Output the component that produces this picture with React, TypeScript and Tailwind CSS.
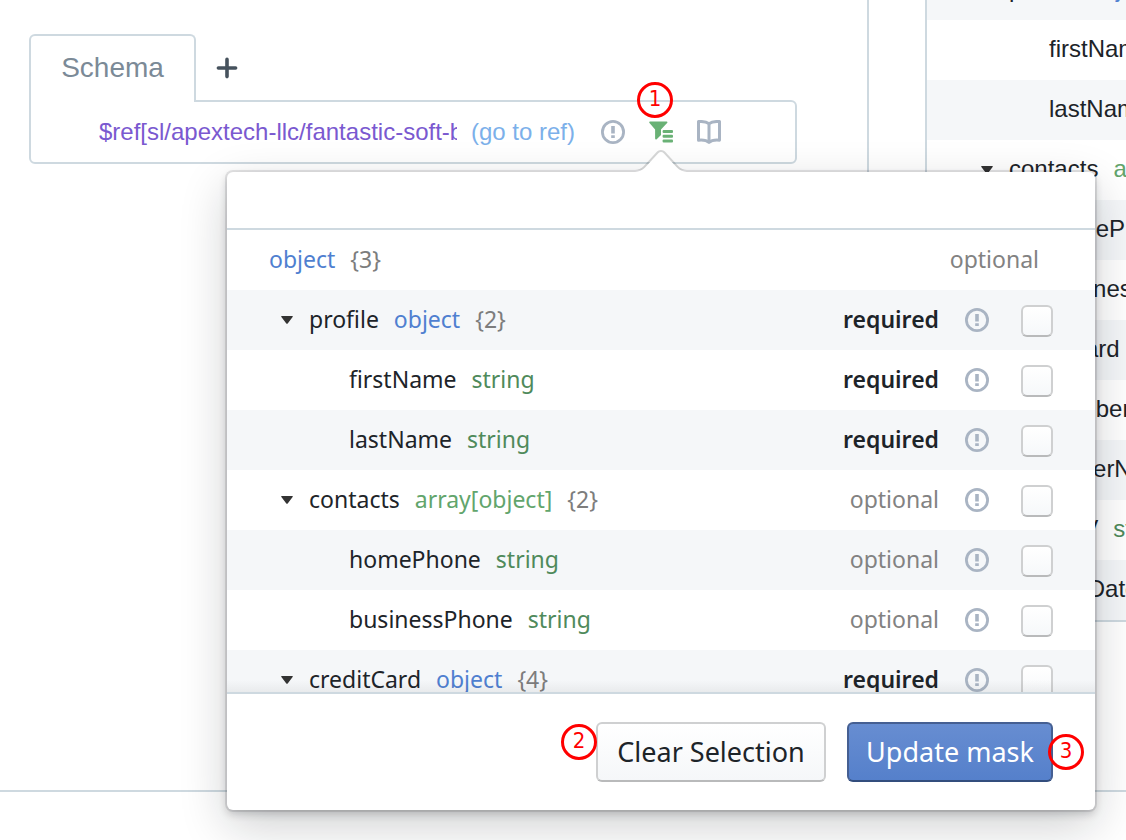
import React from "react";

type Field = {
  name?: string;
  type: "object" | "string" | "array[object]";
  count?: number;
  level: 0 | 1 | 2;
  required?: boolean;
};

const maskFields: Field[] = [
  { type: "object", count: 3, level: 0 },
  { name: "profile", type: "object", count: 2, level: 1, required: true },
  { name: "firstName", type: "string", level: 2, required: true },
  { name: "lastName", type: "string", level: 2, required: true },
  { name: "contacts", type: "array[object]", count: 2, level: 1 },
  { name: "homePhone", type: "string", level: 2 },
  { name: "businessPhone", type: "string", level: 2 },
  { name: "creditCard", type: "object", count: 4, level: 1, required: true },
];

const previewFields: Field[] = [
  { name: "profile", type: "object", count: 2, level: 1 },
  { name: "firstName", type: "string", level: 2 },
  { name: "lastName", type: "string", level: 2 },
  { name: "contacts", type: "array[object]", count: 2, level: 1 },
  { name: "homePhone", type: "string", level: 2 },
  { name: "businessPhone", type: "string", level: 2 },
  { name: "creditCard", type: "object", count: 4, level: 1 },
  { name: "number", type: "string", level: 2 },
  { name: "ownerName", type: "string", level: 2 },
  { name: "CVV", type: "string", level: 2 },
  { name: "expDate", type: "string", level: 2 },
];

const typeColor = {
  object: "text-[#4f7fd0]",
  string: "text-[#4f8a5b]",
  "array[object]": "text-[#62a56c]",
};

const indent = { 0: "pl-[42px]", 1: "pl-[52px]", 2: "pl-[122px]" };

function Caret() {
  return (
    <button type="button" aria-label="Toggle" className="-mr-px flex w-4 shrink-0 items-center justify-center pt-0.5">
      <svg width="12" height="8" viewBox="0 0 12 8" fill="#333333" aria-hidden="true">
        <path d="M0.8 0h10.4q1.1 0 .4.9L6.7 7.4q-.7.8-1.4 0L.4.9Q-.3 0 .8 0z" />
      </svg>
    </button>
  );
}

function FieldLabel({ field }: { field: Field }) {
  return (
    <div className="flex items-center gap-[15px] whitespace-nowrap pb-0.5">
      {field.level === 1 && <Caret />}
      {field.name && <span className="text-[#1d2429]">{field.name}</span>}
      <span className={typeColor[field.type]}>{field.type}</span>
      {field.count !== undefined && <span className="text-[#7d7d7d]">{"{" + field.count + "}"}</span>}
    </div>
  );
}

function IssueIcon() {
  return (
    <svg width="24" height="24" viewBox="0 0 24 24" fill="none" aria-hidden="true">
      <circle cx="12" cy="12" r="10.6" stroke="#a9b4c3" strokeWidth="2.8" />
      <path d="M10.2 6h3.6v7.6h-3.6zM10.2 15.2h3.6v2.8h-3.6z" fill="#a9b4c3" />
    </svg>
  );
}

function FilterListIcon() {
  return (
    <svg width="24" height="24" viewBox="0 0 24 24" fill="#69b175" aria-hidden="true">
      <path d="M1 1.5h16.6c.9 0 1.1.9.5 1.5L12 9.6v4.8c0 .5-.2.9-.5 1.2l-3.8 3.6c-.7.6-1.6.2-1.6-.6V9.6L.5 3C-.1 2.400.2 1.500 1 1.500z" />
      <rect x="13.600" y="10" width="10.400" height="3" rx="1" />
      <rect x="13.600" y="14.700" width="10.400" height="3" rx="1" />
      <rect x="13.600" y="19.400" width="10.400" height="3" rx="1" />
    </svg>
  );
}

function BookIcon() {
  return (
    <svg
      width="24"
      height="24"
      viewBox="0 0 24 24"
      fill="none"
      stroke="#a9b4c3"
      strokeWidth="3"
      strokeLinejoin="round"
      aria-hidden="true"
    >
      <path d="M12 3.600C9.200 1.500 5 1.300 1.500 1.600v18.600C5 19.900 9.400 20 12 22.400c2.600-2.400 7-2.500 10.500-2.200V1.600C19 1.300 14.800 1.500 12 3.600z" />
      <path d="M12 3.600v18" />
    </svg>
  );
}

function Marker({ label, place }: { label: string; place: string }) {
  return (
    <span
      className={
        "pointer-events-none absolute z-20 flex h-9 w-9 items-center justify-center rounded-full border-[3px] border-[#ff0000] pb-0.5 font-['DejaVu_Sans_Condensed','DejaVu_Sans',sans-serif] text-[22px] leading-none text-[#ff0000] " +
        place
      }
    >
      {label}
    </span>
  );
}

function MaskRow({ field }: { field: Field }) {
  const isRoot = field.level === 0;
  return (
    <li
      className={
        "flex h-[60px] items-center justify-between even:bg-[#f5f7f9] " +
        indent[field.level] +
        (isRoot ? " pr-14" : " pr-[42px]")
      }
    >
      <FieldLabel field={field} />
      <div className="flex items-center">
        {field.required ? (
          <span className="pb-0.5 font-semibold text-[#1d2429]">required</span>
        ) : (
          <span className="pb-0.5 text-[#828282]">optional</span>
        )}
        {!isRoot && (
          <>
            <button type="button" aria-label={"Validation for " + field.name} className="ml-[26px]">
              <IssueIcon />
            </button>
            <input
              type="checkbox"
              aria-label={"Select " + field.name}
              className="ml-8 mt-0.5 h-8 w-8 appearance-none rounded-md border-2 border-[#cfd0d1] border-b-[#b9babb] bg-linear-to-b from-white to-[#f6f8fa] checked:bg-[#5580cb]"
            />
          </>
        )}
      </div>
    </li>
  );
}

function MaskPopover() {
  return (
    <div
      role="dialog"
      aria-label="Mask selection"
      className="absolute left-1/2 top-[52px] z-10 w-[868px] -translate-x-1/2 rounded-md bg-white font-['Noto_Sans',sans-serif] text-[23px] leading-[30px] shadow-[0_0_0_2px_rgba(16,22,26,0.1),0_4px_8px_rgba(16,22,26,0.2),0_16px_48px_rgba(16,22,26,0.2)]"
    >
      <svg
        className="absolute -top-[22px] left-1/2 -translate-x-1/2"
        width="60"
        height="22"
        viewBox="0 0 30 11"
        aria-hidden="true"
      >
        <g transform="rotate(90 15 15)">
          <path
            fill="#10161a"
            fillOpacity="0.17"
            d="M8.110 6.302c1.015-.936 1.887-2.922 1.887-4.297v26c0-1.378-.868-3.357-1.888-4.297L.925 17.090c-1.237-1.140-1.233-3.034 0-4.170L8.110 6.302z"
          />
          <path
            fill="#ffffff"
            d="M8.787 7.036c1.220-1.125 2.210-3.376 2.210-5.030V0v30-2.005c0-1.654-.983-3.900-2.210-5.030l-7.183-6.616c-.810-.746-.802-1.960 0-2.700l7.183-6.613z"
          />
        </g>
      </svg>
      <div className="h-[58px] border-b-2 border-[#ced9e0]" />
      <div className="relative">
        <ul className="h-[462px] overflow-hidden">
          {maskFields.map((field) => (
            <MaskRow key={field.name ?? "root"} field={field} />
          ))}
        </ul>
        <div className="pointer-events-none absolute inset-x-0 bottom-0 h-3 bg-linear-to-b from-transparent to-black/5" />
      </div>
      <div className="flex justify-end gap-[21px] border-t-2 border-[#ced9e0] px-[42px] py-7 text-[27px]">
        <div className="relative">
          <button
            type="button"
            className="h-[60px] w-[230px] whitespace-nowrap rounded-md border-2 border-[#cfd0d1] border-b-[#b9babb] bg-linear-to-b from-white to-[#f5f7f9] text-[#1d2429]"
          >
            Clear Selection
          </button>
          <Marker label="2" place="-left-[35px] top-[2px]" />
        </div>
        <div className="relative">
          <button
            type="button"
            className="h-[60px] w-[206px] whitespace-nowrap rounded-md border-2 border-[#455f92] border-b-[#334d7d] bg-linear-to-b from-[#678dd1] to-[#5580cb] text-white"
          >
            Update mask
          </button>
          <Marker label="3" place="-right-[31px] top-3" />
        </div>
      </div>
    </div>
  );
}

function SchemaEditor() {
  return (
    <section className="min-w-0 flex-1 border-r-2 border-[#ced9e0] pl-[29px] pr-[70px] pt-[34px]">
      <div className="flex items-center">
        <button
          type="button"
          className="relative -mb-0.5 h-[68px] w-[167px] rounded-t-md border-2 border-b-0 border-[#ced9e0] bg-white pb-0.5 text-[28px] text-[#7b8a97]"
        >
          Schema
        </button>
        <button type="button" aria-label="Add tab" className="ml-5 pt-0.5">
          <svg width="22" height="22" viewBox="0 0 22 22" stroke="#46525d" strokeWidth="3.6" strokeLinecap="round">
            <path d="M11 2.400v17.200M2.400 11h17.200" />
          </svg>
        </button>
      </div>
      <div className="flex h-16 items-center rounded-md rounded-tl-none border-2 border-[#ced9e0] pl-[68px] pr-[74px]">
        <input
          type="text"
          aria-label="Schema reference"
          defaultValue="$ref[sl/apextech-llc/fantastic-soft-b"
          className="min-w-0 flex-1 bg-transparent text-[#7a59d0] outline-none"
        />
        <a href="#ref" className="ml-[14px] whitespace-nowrap text-[#7cb0ea]">
          (go to ref)
        </a>
        <div className="ml-[26px] flex gap-6">
          <button type="button" aria-label="Validation">
            <IssueIcon />
          </button>
          <div className="relative flex">
            <button type="button" aria-label="Edit mask">
              <FilterListIcon />
            </button>
            <MaskPopover />
            <Marker label="1" place="-left-3 -top-[38px]" />
          </div>
          <button type="button" aria-label="Documentation">
            <BookIcon />
          </button>
        </div>
      </div>
    </section>
  );
}

function Preview() {
  return (
    <section className="w-[257px] shrink-0 overflow-hidden pl-14">
      <ul className="-mt-10 border-b-2 border-l-2 border-[#ced9e0]">
        {previewFields.map((field) => (
          <li
            key={field.name}
            className={"flex h-[60px] items-center odd:bg-[#f5f7f9] " + indent[field.level]}
          >
            <FieldLabel field={field} />
          </li>
        ))}
      </ul>
    </section>
  );
}

export default function App() {
  return (
    <main className="min-h-screen overflow-hidden bg-white font-['Liberation_Sans',sans-serif] text-2xl">
      <div className="flex min-h-[792px] border-b-2 border-[#ced9e0]">
        <SchemaEditor />
        <Preview />
      </div>
    </main>
  );
}
